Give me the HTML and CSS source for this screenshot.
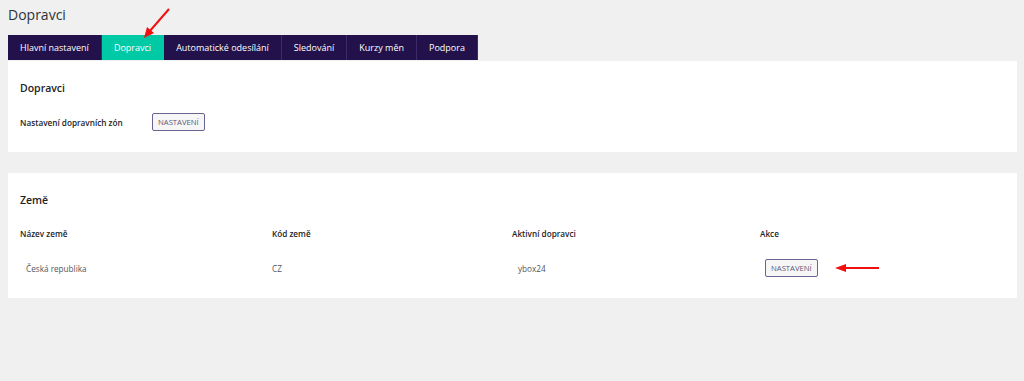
FILE: index.html
```html
<!DOCTYPE html>
<html lang="cs">
<head>
<meta charset="utf-8">
<title>Dopravci</title>
<link rel="stylesheet" href="styles.css">
</head>
<body>
<div class="page">
  <h1 class="title">Dopravci</h1>
  <nav class="tabs">
    <a class="tab">Hlavní nastavení</a>
    <a class="tab active">Dopravci</a>
    <a class="tab">Automatické odesílání</a>
    <a class="tab">Sledování</a>
    <a class="tab">Kurzy měn</a>
    <a class="tab">Podpora</a>
  </nav>
  <section class="card card-first">
    <h2 class="card-title">Dopravci</h2>
    <div class="setting-row">
      <span class="setting-label">Nastavení dopravních zón</span>
      <button class="btn">NASTAVENÍ</button>
    </div>
  </section>
  <section class="card card-second">
    <h2 class="card-title">Země</h2>
    <div class="table">
      <div class="row head">
        <div class="cell">Název země</div>
        <div class="cell">Kód země</div>
        <div class="cell">Aktivní dopravci</div>
        <div class="cell">Akce</div>
      </div>
      <div class="row body">
        <div class="cell">Česká republika</div>
        <div class="cell">CZ</div>
        <div class="cell">ybox24</div>
        <div class="cell"><button class="btn">NASTAVENÍ</button></div>
      </div>
    </div>
  </section>
</div>
<svg class="arrow arrow-tab" width="34" height="34" viewBox="0 0 34 34">
  <line x1="30" y1="2" x2="10" y2="25" stroke="#f01010" stroke-width="2"/>
  <polygon points="5,31 8,20 15,26" fill="#f01010"/>
</svg>
<svg class="arrow arrow-row" width="46" height="10" viewBox="0 0 46 10">
  <line x1="10" y1="5" x2="44" y2="5" stroke="#f01010" stroke-width="2"/>
  <polygon points="0,5 11,1 11,9" fill="#f01010"/>
</svg>
</body>
</html>
```
FILE: styles.css
```css
html, body {
  margin: 0;
  padding: 0;
  background: #f0f0f0;
}
body {
  font-family: "Open Sans", "Noto Sans", sans-serif;
  color: #1d2327;
  position: relative;
  width: 1024px;
  height: 381px;
  overflow: hidden;
}
.page {
  padding: 0 7px 0 8px;
}
.title {
  margin: 0;
  padding-top: 5px;
  height: 30px;
  font-size: 14px;
  font-weight: 400;
  line-height: 20px;
  color: #2c3338;
}
.tabs {
  display: flex;
  height: 25px;
}
.tab {
  display: flex;
  align-items: center;
  padding: 0 12px;
  background: #22114a;
  color: #fff;
  font-size: 9px;
  border-right: 1px solid #3c2b66;
}
.tab.active {
  background: #00c9a5;
  border-right-color: #00c9a5;
}
.tab:last-child {
  border-right: 1px solid #3c2b66;
}
.card {
  background: #fff;
  margin-top: 1px;
  padding: 0 12px;
}
.card-first {
  height: 91px;
}
.card-second {
  margin-top: 21px;
  height: 125px;
}
.card-title {
  margin: 0;
  padding-top: 20px;
  font-size: 10.5px;
  font-weight: 600;
  line-height: 15px;
  color: #1d2327;
}
.setting-row {
  display: flex;
  align-items: center;
  margin-top: 17px;
}
.setting-label {
  width: 132px;
  font-size: 8.2px;
  font-weight: 600;
  color: #1d2327;
}
.btn {
  font-family: inherit;
  font-size: 7.7px;
  color: #5d5874;
  background: #f6f6f7;
  border: 1px solid #6a6290;
  border-radius: 2px;
  height: 18px;
  padding: 0 5px;
  line-height: 16px;
}
.table {
  margin-top: 20px;
}
.row {
  display: grid;
  grid-template-columns: 252px 240px 248px 1fr;
}
.row.head {
  font-size: 8.2px;
  font-weight: 600;
  color: #1d2327;
  height: 18px;
}
.row.body {
  margin-top: 12px;
  font-size: 8.2px;
  color: #50575e;
  align-items: center;
  height: 20px;
}
.row.body .cell:first-child { padding-left: 6px; }
.row.body .cell:nth-child(3) { padding-left: 6px; }
.row.body .cell:nth-child(4) { padding-left: 5px; }
.arrow {
  position: absolute;
}
.arrow-tab {
  left: 139px;
  top: 7px;
}
.arrow-row {
  left: 835px;
  top: 263px;
}
```
